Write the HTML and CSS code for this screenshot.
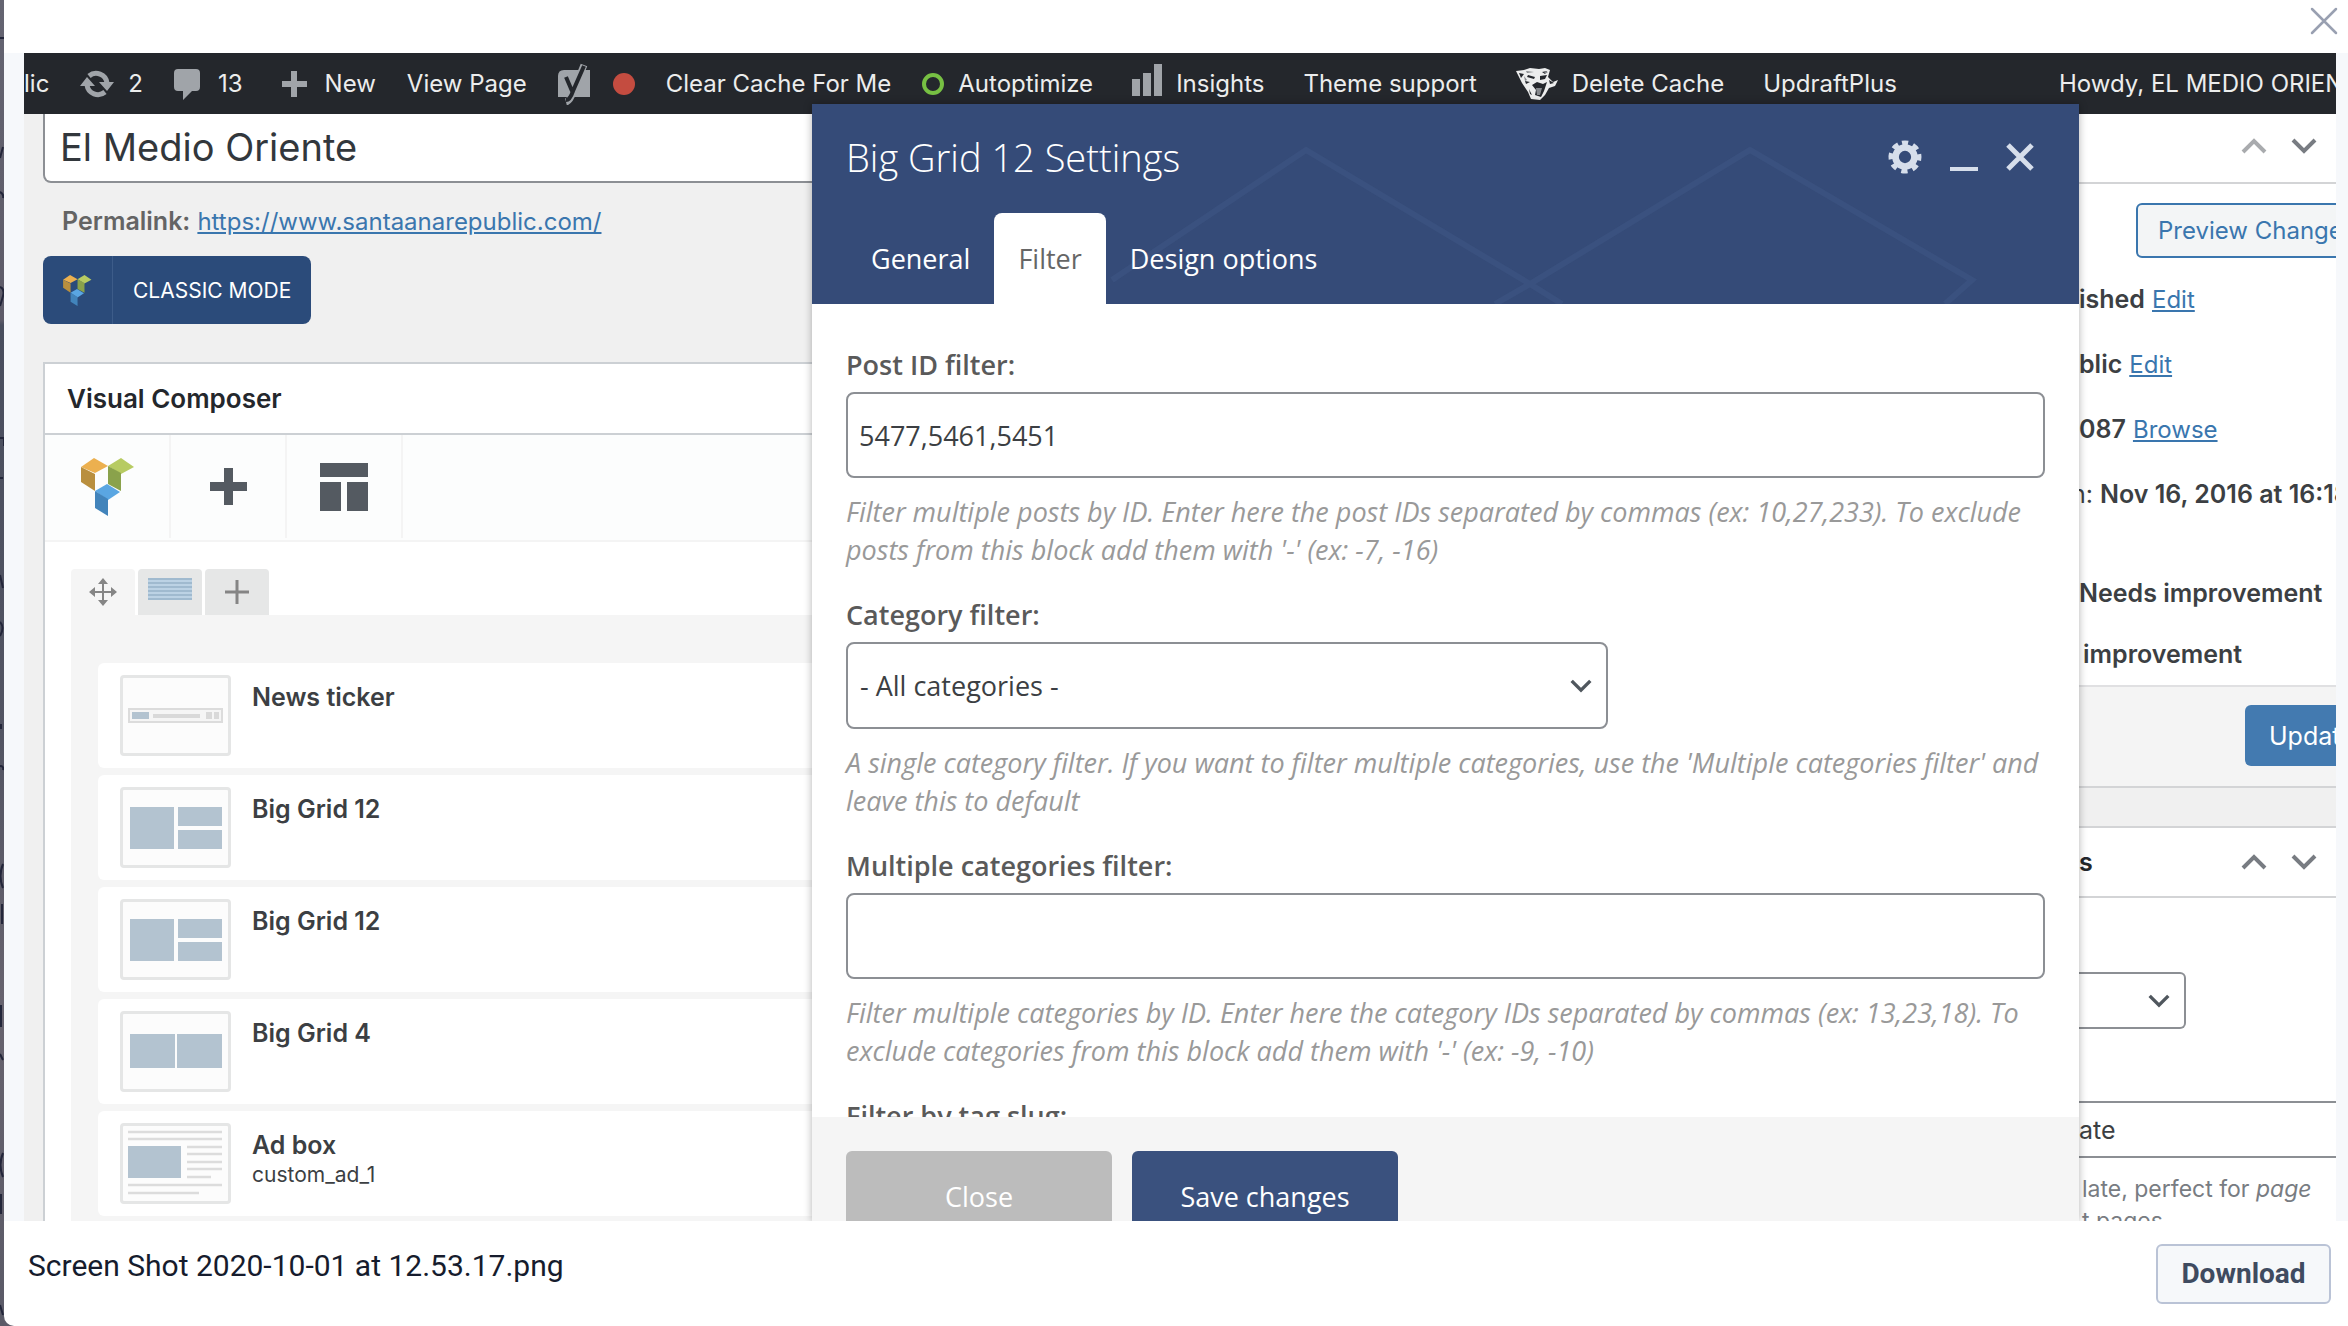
FILE: index.html
```
<!DOCTYPE html>
<html lang="en">
<head>
<meta charset="utf-8">
<title>Screen Shot 2020-10-01 at 12.53.17.png</title>
<link rel="stylesheet" href="styles.css">
</head>
<body>
<svg class="sprite" aria-hidden="true">
  <symbol id="logo" viewBox="0 0 54 58">
    <path fill="#ecb04f" d="M14 0l14 8-13 7-14-6z"/><path fill="#b98f3e" d="M1 9l14 7v17L1 24z"/>
    <path fill="#b7cb62" d="M41 0l13 9-13 7-13-8z"/><path fill="#8aa24b" d="M28 8l13 7v18l-13-7z"/>
    <path fill="#5aa6e2" d="M27 26l13 8-12 8-13-9z"/><path fill="#4284bb" d="M15 33l13 8v17l-13-8z"/>
  </symbol>
  <symbol id="up" viewBox="0 0 26 16"><path fill="none" stroke="currentColor" stroke-width="4" d="M2 14L13 3l11 11"/></symbol>
  <symbol id="down" viewBox="0 0 26 16"><path fill="none" stroke="currentColor" stroke-width="4" d="M2 2l11 11L24 2"/></symbol>
  <symbol id="grid12" viewBox="0 0 105 75">
    <path fill="#b3c3d0" d="M7 17h44v42H7zM55 17h44v19H55zM55 40h44v19H55z"/>
  </symbol>
</svg>
<div class="page">
  <div class="backdrop" aria-hidden="true">
    <svg width="4" height="1326" viewBox="0 0 4 1326"><path fill="none" stroke="#23263a" stroke-width="2" d="M0 38h4M0 158l3-11M0 192q4 2 3 6M0 287q5 2 3 9t-3 10M0 438h4v8M0 478h3M0 575l3 13M0 622q5 5 0 14M1 724v5M0 766q4 0 3 4M3 864q-5 12 0 24M2 904v20M1 1005v22M0 1054l3 6M3 1153q-5 12 0 24M1 1194v20M0 1305l3 10"/></svg>
  </div>
  <main class="dialog">
    <header class="dialog-head">
      <button class="dismiss" aria-label="Dismiss"><svg width="28" height="28" viewBox="0 0 28 28"><path fill="none" stroke="#99a0b1" stroke-width="2.5" stroke-linecap="round" d="M2 2l24 24M26 2L2 26"/></svg></button>
    </header>
    <div class="preview">
      <div class="shot">
        <nav class="adminbar">
          <a href="#">lic</a>
          <a href="#"><svg width="34" height="30" viewBox="0 0 34 30"><g fill="none" stroke="#a0a4a9" stroke-width="5"><path d="M9 7a11 11 0 0 1 18 7"/><path d="M25 23a11 11 0 0 1-18-7"/></g><path fill="#a0a4a9" d="M0 17l7-9 8 9zM19 13h15l-7 9z"/></svg>2</a>
          <a href="#" class="comments"><svg width="26" height="32" viewBox="0 0 26 32"><path fill="#a0a4a9" d="M4 1h18q4 0 4 4v14q0 4-4 4h-4l-9 9v-9H4q-4 0-4-4V5q0-4 4-4z"/></svg>13</a>
          <a href="#" class="new wide"><svg width="25" height="26" viewBox="0 0 25 26"><path fill="#a0a4a9" d="M9 0h6v10h10v6H15v10H9V16H0v-6h9z"/></svg>New</a>
          <a href="#">View Page</a>
          <a href="#" class="seo" aria-label="SEO"><svg width="32" height="42" viewBox="0 0 32 42"><path fill="#a0a4a9" d="M6 7h26v27H0V13q0-6 6-6z"/><path fill="none" stroke="#a0a4a9" stroke-width="7" d="M26 2L15 29q-3 9-7 10"/><path fill="none" stroke="#24272c" stroke-width="4" d="M8 14l6 14M26 3L15 28q-3 9-7 9"/></svg><i class="dot"></i></a>
          <a href="#">Clear Cache For Me</a>
          <a href="#"><i class="ring"></i>Autoptimize</a>
          <a href="#" class="insights wide"><svg width="30" height="32" viewBox="0 0 30 32"><path fill="#a0a4a9" d="M0 15h8v17H0zM11 9h8v23h-8zM22 0h8v32h-8z"/></svg>Insights</a>
          <a href="#" class="wide">Theme support</a>
          <a href="#" class="wide"><svg width="42" height="32" viewBox="0 0 42 32"><path fill="#eceded" d="M0 3l8-1 6-2 9 1 6-1 5 2-2 7 5 5 5-2-3 6-6 2-4 7-5 5-9-1-3-7-6-9z"/><path fill="#24272c" d="M3 5l5 1-3 4zM12 7l7 2-1 2-7-2zM24 8l7-1-2 4-5 1zM16 17l5-3 6 2 4-2-3 9-3 6-6-2 1-5zM33 12l5 3-4 1zM13 21l3 6-2-1zM9 13l5 1-4 2zM31 3l-2 3-3-2z"/><path fill="#85888c" d="M20 20h6l-2 7h-3zM10 3l8 1-7 1zM28 3l4 1-3 2zM8 8l3 4-2 1z"/></svg>Delete Cache</a>
          <a href="#" class="wide">UpdraftPlus</a>
          <a href="#" class="howdy">Howdy, EL MEDIO ORIENTE</a>
        </nav>
        <div class="columns">
          <section class="editor">
            <input class="title" aria-label="Title" value="El Medio Oriente">
            <p class="permalink"><b>Permalink:</b> <a href="#">https://www.santaanarepublic.com/</a></p>
            <button class="classic"><span class="classic-icon"><svg width="30" height="31"><use href="#logo"/></svg></span><span class="classic-text">CLASSIC MODE</span></button>
            <div class="composer">
              <h2>Visual Composer</h2>
              <div class="tools">
                <button aria-label="Composer"><svg width="54" height="58"><use href="#logo"/></svg></button>
                <button aria-label="Add element"><svg width="37" height="37" viewBox="0 0 37 37"><path fill="#545a61" d="M14 0h9v14h14v9H23v14h-9V23H0v-9h14z"/></svg></button>
                <button aria-label="Templates"><svg width="48" height="48" viewBox="0 0 48 48"><path fill="#545a61" d="M0 0h48v14H0zM0 19h21v29H0zM27 19h21v29H27z"/></svg></button>
              </div>
              <div class="rowtabs">
                <button class="move" aria-label="Move row"><svg width="28" height="28" viewBox="0 0 28 28"><path fill="none" stroke="#858585" stroke-width="2" d="M14 3v22M3 14h22"/><path fill="#858585" d="M14 0l5 6H9zM14 28l5-6H9zM0 14l6-5v10zM28 14l-6-5v10z"/></svg></button>
                <button aria-label="Row layout"><svg class="lines" width="44" height="22" viewBox="0 0 44 22"><path fill="#bcd2e4" d="M0 0h44v22H0z"/><path stroke="#97b2c8" stroke-width="1.5" d="M0 1h44M0 5h44M0 9h44M0 13h44M0 17h44M0 21h44"/></svg></button>
                <button aria-label="Add row"><svg width="24" height="24" viewBox="0 0 24 24"><path fill="none" stroke="#858585" stroke-width="3" d="M12 0v24M0 12h24"/></svg></button>
              </div>
              <ul class="blocks">
                <li><svg class="thumb" viewBox="0 0 105 75"><path fill="#f5f5f5" stroke="#dcdcdc" stroke-width="2" d="M6 31h93v13H6z"/><path fill="#b3c3d0" d="M9 34h17v7H9z"/><path fill="#d9d9d9" d="M30 36h47v4H30zM83 34h6v7h-6zM91 34h5v7h-5z"/></svg><div><h3>News ticker</h3></div></li>
                <li><svg class="thumb"><use href="#grid12"/></svg><div><h3>Big Grid 12</h3></div></li>
                <li><svg class="thumb"><use href="#grid12"/></svg><div><h3>Big Grid 12</h3></div></li>
                <li><svg class="thumb" viewBox="0 0 105 75"><path fill="#b3c3d0" d="M7 20h45v34H7zM54 20h45v34H54z"/></svg><div><h3>Big Grid 4</h3></div></li>
                <li><svg class="thumb" viewBox="0 0 105 75"><path fill="#b3c3d0" d="M5 20h53v32H5z"/><path stroke="#dcdcdc" stroke-width="2.500" d="M5 6h94M5 13h94M64 21h35M64 28h35M64 36h35M64 43h35M64 51h24M5 59h94M5 67h71"/></svg><div><h3>Ad box</h3><p>custom_ad_1</p></div></li>
              </ul>
            </div>
          </section>
          <aside class="sidebar">
            <section class="box publish">
              <header><span></span><button class="faded" aria-label="Move up"><svg width="26" height="16"><use href="#up"/></svg></button><button aria-label="Move down"><svg width="26" height="16"><use href="#down"/></svg></button></header>
              <div class="publish-body">
                <button class="outline">Preview Changes</button>
                <p><b>ished</b> <a href="#">Edit</a></p>
                <p><b>blic</b> <a href="#">Edit</a></p>
                <p><b>087</b> <a href="#">Browse</a></p>
                <p class="date">n: <b>Nov 16, 2016 at 16:18</b></p>
                <p class="score"><b>Needs improvement</b></p>
                <p class="score-last"><b>improvement</b></p>
              </div>
              <footer><button class="update">Update</button></footer>
            </section>
            <section class="box attributes">
              <header><span>s</span><button aria-label="Move up"><svg width="26" height="16"><use href="#up"/></svg></button><button aria-label="Move down"><svg width="26" height="16"><use href="#down"/></svg></button></header>
              <div class="select-wrap small"><select aria-label="Parent"><option></option></select><svg width="22" height="14"><use href="#down"/></svg></div>
              <input class="template" aria-label="Template" value="ate">
              <p class="note">late, perfect for <i>page</i><br>t pages</p>
            </section>
          </aside>
        </div>
        <form class="modal">
          <header class="modal-head">
            <svg class="facets" viewBox="0 0 1267 200" preserveAspectRatio="none" aria-hidden="true"><path fill="none" stroke="#3f5885" stroke-opacity=".5" stroke-width="6" d="M300 176L494 46l224 134 32 20M683 200l35-20L938 46l222 130-27 24"/></svg>
            <div class="modal-title"><h1>Big Grid 12 Settings</h1>
              <button type="button" aria-label="Settings"><svg width="34" height="34" viewBox="0 0 36 36"><path fill="none" stroke="#d6deeb" stroke-width="7" stroke-dasharray="6 4.996" d="M18 4a14 14 0 1 1-.01 0" transform="rotate(-12 18 18)"/><circle cx="18" cy="18" r="10" fill="none" stroke="#d6deeb" stroke-width="7"/></svg></button>
              <button type="button" aria-label="Minimize"><svg width="28" height="28" viewBox="0 0 28 28"><path fill="#d6deeb" d="M0 24h28v4H0z"/></svg></button>
              <button type="button" aria-label="Close panel"><svg width="28" height="28" viewBox="0 0 28 28"><path fill="none" stroke="#d6deeb" stroke-width="5" d="M2 2l24 24M26 2L2 26"/></svg></button>
            </div>
            <div class="tabs"><button type="button">General</button><button type="button" class="on">Filter</button><button type="button">Design options</button></div>
          </header>
          <div class="modal-body">
            <label for="ids">Post ID filter:</label>
            <input id="ids" value="5477,5461,5451">
            <p>Filter multiple posts by ID. Enter here the post IDs separated by commas (ex: 10,27,233). To exclude posts from this block add them with '-' (ex: -7, -16)</p>
            <label for="cat">Category filter:</label>
            <div class="select-wrap"><select id="cat"><option>- All categories -</option></select><svg width="22" height="14"><use href="#down"/></svg></div>
            <p>A single category filter. If you want to filter multiple categories, use the 'Multiple categories filter' and leave this to default</p>
            <label for="cats">Multiple categories filter:</label>
            <input id="cats">
            <p>Filter multiple categories by ID. Enter here the category IDs separated by commas (ex: 13,23,18). To exclude categories from this block add them with '-' (ex: -9, -10)</p>
            <label for="tag">Filter by tag slug:</label>
            <input id="tag">
          </div>
          <footer class="modal-foot"><button type="button" class="close">Close</button><button type="button" class="save">Save changes</button></footer>
        </form>
      </div>
    </div>
    <footer class="dialog-foot"><span>Screen Shot 2020-10-01 at 12.53.17.png</span><button class="download">Download</button></footer>
  </main>
</div>
</body>
</html>
```
FILE: styles.css
```
* { box-sizing: border-box; }
body { margin: 0; font-family: Inter, "Liberation Sans", sans-serif; }
h1, h2, h3, p, ul { margin: 0; padding: 0; }
button, input, select { font: inherit; color: inherit; margin: 0; }
button { border: 0; background: none; padding: 0; }
svg { display: block; flex: none; }
.sprite { position: absolute; width: 0; height: 0; }
.page { display: flex; height: 100vh; overflow: hidden; background: #5c5b69; }
.backdrop { width: 4px; flex: none; overflow: hidden; background: linear-gradient(#646471 0, #5e5c69 320px, #494e5e 325px, #535563 740px, #67636e 1000px, #5a5a67); }
.dialog { flex: 1; min-width: 0; display: flex; flex-direction: column; background: #fff; border-bottom-left-radius: 10px; }
.dialog-head { height: 53px; flex: none; display: flex; justify-content: flex-end; align-items: flex-start; padding: 7px 10px; }
.preview { flex: 1; min-height: 0; padding: 0 12px 0 20px; background: #f6f8fb; display: flex; }
.shot { position: relative; flex: 1; min-width: 0; overflow: hidden; background: #f0f0f0; color: #3c3f43; font-size: 26px; display: flex; flex-direction: column; }

.adminbar { height: 61px; flex: none; display: flex; align-items: center; gap: 31px; background: #24272c; color: #eceded; font-size: 24px; font-weight: 500; white-space: nowrap; overflow: hidden; }
.adminbar a { color: inherit; font-weight: 400; font-size: 24px; text-decoration: none; display: flex; align-items: center; gap: 14px; }
.adminbar .comments { gap: 18px; }
.adminbar .new { gap: 18px; }
.adminbar .seo { gap: 23px; }
.adminbar .wide { margin-left: 8px; }
.adminbar .howdy { width: 277px; margin-left: auto; flex: none; overflow: hidden; }
.dot { width: 22px; height: 22px; border-radius: 50%; background: #c44c40; }
.ring { width: 22px; height: 22px; border-radius: 50%; border: 4px solid #77c043; }
.insights svg { margin-bottom: 8px; }

.columns { flex: 1; min-height: 0; display: grid; grid-template-columns: 1fr 257px; }
.editor { padding: 0 40px 0 19px; min-width: 0; }
.title { display: block; width: 100%; height: 69px; padding: 0 15px 2px; border: 2px solid #8c8f94; border-top: 0; border-radius: 0 0 8px 8px; background: #fff; color: #32373c; font-size: 38px; }
.permalink { padding: 20px 0 16px 19px; line-height: 36px; font-size: 25px; color: #646464; }
.permalink b { font-weight: 600; }
a { color: #3a76ae; font-size: 24px; }
.classic { display: flex; height: 68px; border-radius: 8px; background: #2b4b7a; color: #fff; font-size: 21px; }
.classic-icon { align-self: stretch; width: 70px; padding-left: 19px; display: flex; align-items: center; border-right: 1px solid #3d5c89; }
.classic-text { align-self: center; padding: 0 20px; }
.composer { margin-top: 38px; border: 2px solid #ccd0d4; border-bottom: 0; background: #fff; height: 900px; }
.composer h2 { height: 71px; padding-left: 22px; border-bottom: 2px solid #ccd0d4; font-size: 26px; font-weight: 600; line-height: 69px; color: #24272c; }
.tools { display: flex; height: 107px; padding-bottom: 2px; background: #fcfdfd; border-bottom: 2px solid #f4f4f4; }
.tools button { width: 116px; display: flex; align-items: center; justify-content: center; border-right: 2px solid #f4f4f4; }
.tools button:first-child { width: 126px; }
.rowtabs { display: flex; gap: 3px; padding: 27px 0 0 26px; }
.rowtabs button { width: 64px; height: 46px; display: flex; align-items: center; justify-content: center; background: #e6e7e7; border-radius: 4px 4px 0 0; }
.rowtabs .move { background: #f5f5f5; }
.lines { margin-bottom: 6px; }
.blocks { list-style: none; margin-left: 26px; height: 700px; padding: 48px 0 0 27px; background: #f5f5f5; display: flex; flex-direction: column; gap: 7px; }
.blocks li { display: flex; gap: 21px; height: 105px; flex: none; padding: 12px 22px; background: #fff; border-radius: 6px; }
.thumb { width: 111px; height: 81px; border: 3px solid #e5e6e6; border-radius: 4px; background: #fcfcfc; }
.blocks h3 { font-size: 25px; line-height: 30px; font-weight: 600; padding-top: 7px; }
.blocks p { font-size: 21px; line-height: 30px; }

.sidebar { font-size: 25px; white-space: nowrap; overflow: hidden; }
.box { background: #fff; }
.sidebar b { font-weight: 600; }
.box header { height: 70px; display: flex; align-items: center; padding: 0 19px 4px 0; border-bottom: 2px solid #d3d4d6; color: #24272c; font-weight: 600; }
.box header span { flex: 1; }
.box header button { margin-left: 24px; color: #787c82; }
.box header .faded { color: #a9abae; }
.publish-body { height: 501px; padding-top: 19px; }
.outline { display: block; margin: 0 0 9px 57px; height: 55px; padding: 0 20px; border: 2px solid #3a76ae; border-radius: 6px; background: #f3f5f6; color: #3a76ae; font-size: 24px; }
.publish-body p { line-height: 65px; }
.publish-body .date { margin-left: -8px; }
.publish-body .score { padding-top: 34px; }
.publish-body .score-last { line-height: 57px; padding-left: 4px; }
.publish footer { height: 103px; padding: 18px 0 0 166px; background: #f4f4f4; border-top: 2px solid #e0e0e2; border-bottom: 2px solid #d3d4d6; }
.update { height: 61px; padding: 0 24px; border-radius: 6px; background: #437ab0; color: #fff; }
.attributes { margin-top: 38px; border-top: 2px solid #d3d4d6; height: 500px; }
.attributes header { padding-bottom: 0; }
.select-wrap { display: flex; align-items: center; color: #50575e; }
.select-wrap select { flex: 1; width: 100%; height: 87px; appearance: none; border: 2px solid #8c8f94; border-radius: 8px; background: #fff; padding: 0 12px; color: #3c3f43; }
.select-wrap svg { margin-left: -38px; margin-right: 16px; pointer-events: none; }
.select-wrap.small { width: 107px; margin-top: 74px; }
.small select { height: 57px; border-left: 0; border-radius: 0 6px 6px 0; }
.template { display: block; width: 100%; height: 57px; margin-top: 72px; padding: 0; border: 2px solid #8c8f94; border-width: 2px 0; background: #fff; }
.note { padding: 15px 0 0 3px; line-height: 32px; font-size: 23px; color: #787c82; }

.modal { position: absolute; left: 788px; right: 257px; top: 51px; bottom: 0; display: flex; flex-direction: column; overflow: hidden; background: #fff; box-shadow: 0 0 8px rgba(0, 0, 0, .3); font-family: "Open Sans", sans-serif; font-size: 27px; }
.modal-head { position: relative; height: 200px; flex: none; background: #354b78; color: #fff; display: flex; flex-direction: column; justify-content: space-between; }
.facets { position: absolute; inset: 0; width: 100%; height: 100%; }
.modal-title { position: relative; display: flex; align-items: center; padding: 26px 45px 0 34px; gap: 28px; }
.modal-title h1 { flex: 1; font-size: 38px; line-height: 54px; font-weight: 300; }
.tabs { position: relative; display: flex; padding-left: 35px; }
.tabs button { height: 91px; padding: 0 24px; border-radius: 8px 8px 0 0; }
.tabs .on { background: #fff; color: #666; }
.modal-body { flex: 1; min-height: 0; overflow: hidden; padding: 42px 34px 0; }
.modal-body label { display: block; line-height: 38px; font-weight: 600; color: #5a5a5a; margin-bottom: 8px; }
.modal-body input { display: block; width: 100%; height: 86px; padding: 0 11px; border: 2px solid #8c8f94; border-radius: 8px; background: #fff; }
.modal-body p { line-height: 38px; margin: 15px 0 27px; font-style: italic; color: #999; }
.modal-body .select-wrap { width: 762px; }
.modal-foot { height: 104px; flex: none; display: flex; align-items: flex-start; gap: 20px; padding: 34px 34px 0; background: #f5f5f5; }
.modal-foot button { width: 266px; height: 91px; border-radius: 6px; color: #fff; }
.close { background: #bcbcbc; }
.save { background: #3a517e; }

.dialog-foot { height: 105px; flex: none; display: flex; align-items: flex-start; justify-content: space-between; padding: 23px 17px 0 24px; font-family: Roboto, sans-serif; font-size: 30px; line-height: 44px; color: #161c2d; }
.download { width: 175px; height: 60px; border: 2px solid #bac3d6; border-radius: 6px; background: #f6f8fa; color: #3f4b60; font-size: 28px; font-weight: 700; }
```
